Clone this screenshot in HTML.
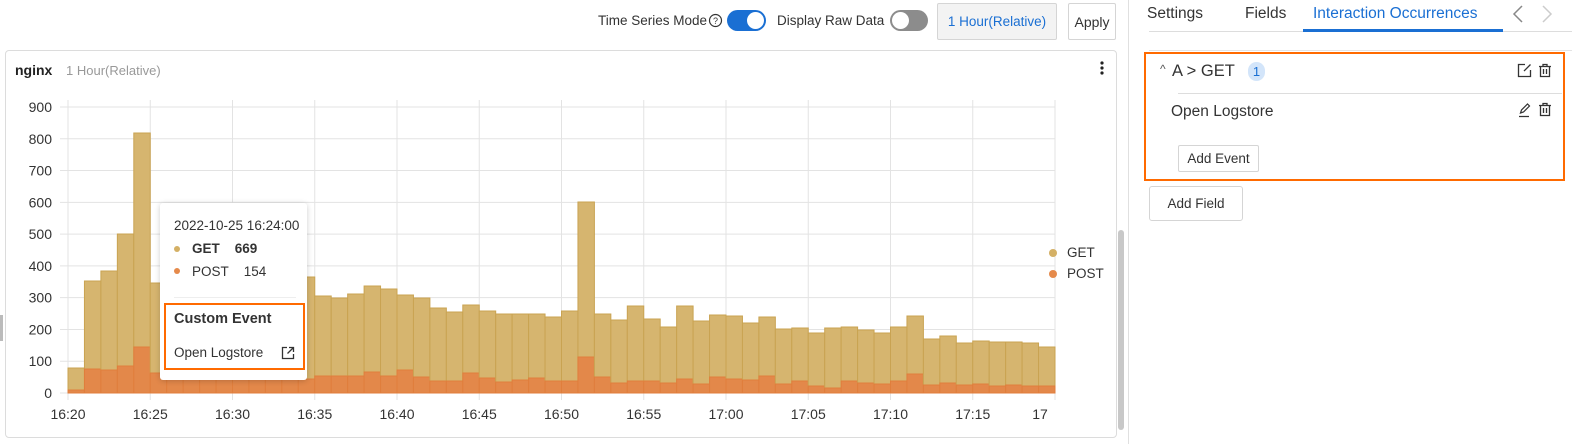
<!DOCTYPE html>
<html><head><meta charset="utf-8">
<style>
*{box-sizing:border-box;margin:0;padding:0}
body{width:1577px;height:444px;background:#fff;font-family:"Liberation Sans",sans-serif;color:#333;position:relative;overflow:hidden;font-size:13.5px}
.a{position:absolute;white-space:nowrap}
.btn{position:absolute;border:1px solid #d5d5d5;background:#fff;font-size:13.5px;color:#333;display:flex;align-items:center;justify-content:center;border-radius:2px}
</style></head><body>
<div class="a" style="left:598px;top:13px">Time Series Mode</div>
<svg class="a" style="left:708px;top:13px" width="16" height="16"><circle cx="7.5" cy="7.5" r="6" fill="none" stroke="#333" stroke-width="1.2"/><text x="7.5" y="11" font-size="9" text-anchor="middle" fill="#333" font-family="Liberation Sans">?</text></svg>
<div class="a" style="left:727px;top:10px;width:39px;height:21px;border-radius:11px;background:#1a6fd3"><div class="a" style="left:20px;top:2px;width:17px;height:17px;border-radius:50%;background:#fff"></div></div>
<div class="a" style="left:777px;top:13px">Display Raw Data</div>
<div class="a" style="left:890px;top:10px;width:38px;height:21px;border-radius:11px;background:#8c8c8c"><div class="a" style="left:2px;top:2px;width:17px;height:17px;border-radius:50%;background:#fff"></div></div>
<div class="btn" style="left:937px;top:3px;width:120px;height:37px;background:#f3f3f3;color:#1a6fd3">1 Hour(Relative)</div>
<div class="btn" style="left:1068px;top:3px;width:48px;height:37px;font-size:14px">Apply</div>

<div class="a" style="left:5px;top:50px;width:1112px;height:388px;border:1px solid #dcdcdc;border-radius:4px"></div>
<div class="a" style="left:15px;top:62px;font-weight:bold;font-size:14px;color:#222">nginx</div>
<div class="a" style="left:66px;top:63px;font-size:13px;color:#999">1 Hour(Relative)</div>
<svg class="a" style="left:1098px;top:60px" width="8" height="16"><circle cx="4" cy="3" r="1.6" fill="#222"/><circle cx="4" cy="8" r="1.6" fill="#222"/><circle cx="4" cy="13" r="1.6" fill="#222"/></svg>
<div class="a" style="left:1118px;top:230px;width:6px;height:200px;background:#c8c8c8;border-radius:3px"></div>
<div class="a" style="left:0;top:315px;width:3px;height:26px;background:#bbb"></div>

<svg class="a" id="ch" style="left:0;top:0" width="1120" height="440" font-family="Liberation Sans" font-size="14"></svg>

<div class="a" style="left:160px;top:203px;width:147px;height:177px;background:#fff;box-shadow:0 1px 6px rgba(0,0,0,.2);border-radius:3px"></div>
<div class="a" style="left:174px;top:218px;font-size:13.5px;color:#333">2022-10-25 16:24:00</div>
<div class="a" style="left:174px;top:246px;width:6px;height:6px;border-radius:50%;background:#d4b065"></div>
<div class="a" style="left:192px;top:241px;font-weight:bold;font-size:13.5px">GET&nbsp;&nbsp;&nbsp;&nbsp;669</div>
<div class="a" style="left:174px;top:268px;width:6px;height:6px;border-radius:50%;background:#e58a4b"></div>
<div class="a" style="left:192px;top:264px;font-size:13.5px">POST&nbsp;&nbsp;&nbsp;&nbsp;154</div>
<div class="a" style="left:174px;top:297px;width:122px;height:1px;background:#eee"></div>
<div class="a" style="left:164px;top:303px;width:141px;height:67px;border:2px solid #ff6a00"></div>
<div class="a" style="left:174px;top:311px;font-weight:bold;font-size:14.5px;color:#333">Custom Event</div>
<div class="a" style="left:174px;top:345px;font-size:13.5px">Open Logstore</div>
<svg class="a" style="left:281px;top:346px" width="14" height="14"><path d="M6 1.5H1.5v11h11V8M8 1.5h4.5V6M12.5 1.5L6.5 7.5" fill="none" stroke="#333" stroke-width="1.3"/></svg>

<div class="a" style="left:1049px;top:249px;width:8px;height:8px;border-radius:50%;background:#d4b065"></div>
<div class="a" style="left:1067px;top:245px;font-size:13.5px">GET</div>
<div class="a" style="left:1049px;top:270px;width:8px;height:8px;border-radius:50%;background:#e58a4b"></div>
<div class="a" style="left:1067px;top:266px;font-size:13.5px">POST</div>

<div class="a" style="left:1128px;top:0;width:1px;height:444px;background:#e0e0e0"></div>
<div class="a" style="left:1147px;top:5px;font-size:15.5px;color:#333">Settings</div>
<div class="a" style="left:1245px;top:5px;font-size:15.5px;color:#333">Fields</div>
<div class="a" style="left:1313px;top:5px;font-size:15.5px;color:#1a6fd3">Interaction Occurrences</div>
<div class="a" style="left:1149px;top:31px;width:423px;height:1px;background:#ddd"></div>
<div class="a" style="left:1303px;top:29px;width:200px;height:3px;background:#1a6fd3"></div>
<svg class="a" style="left:1510px;top:4px" width="50" height="20"><path d="M12 2L4 10l8 8" fill="none" stroke="#888" stroke-width="1.5"/><path d="M33 2l8 8-8 8" fill="none" stroke="#ccc" stroke-width="1.5"/></svg>
<div class="a" style="left:1149px;top:50px;width:423px;height:1px;background:#e4e4e4"></div>
<div class="a" style="left:1144px;top:52px;width:421px;height:129px;border:2px solid #ff6a00"></div>
<div class="a" style="left:1160px;top:62px;font-size:12px;color:#555">^</div>
<div class="a" style="left:1172px;top:62px;font-size:16.5px;color:#333">A &gt; GET</div>
<div class="a" style="left:1248px;top:62px;width:17px;height:19px;border-radius:9px;background:#d3e5fa;color:#1a6fd3;font-size:13px;text-align:center;line-height:19px">1</div>
<svg class="a" style="left:1517px;top:63px" width="40" height="16"><path d="M8 1.5H1.5v12h12V7M13.5 1.5L7 8" fill="none" stroke="#333" stroke-width="1.3"/><path d="M22 3.5h12M26 3.5V1.5h4v2M23.5 3.5v10h9v-10M26.5 6v5M29.5 6v5" fill="none" stroke="#333" stroke-width="1.3"/></svg>
<div class="a" style="left:1178px;top:93px;width:384px;height:1px;background:#ddd"></div>
<div class="a" style="left:1171px;top:103px;font-size:15.5px;color:#333">Open Logstore</div>
<svg class="a" style="left:1517px;top:102px" width="40" height="16"><path d="M2 14.5h10M3.5 11l1-3 6-6 2 2-6 6z" fill="none" stroke="#333" stroke-width="1.2"/><path d="M22 3.5h12M26 3.5V1.5h4v2M23.5 3.5v10h9v-10M26.5 6v5M29.5 6v5" fill="none" stroke="#333" stroke-width="1.3"/></svg>
<div class="btn" style="left:1178px;top:145px;width:81px;height:27px">Add Event</div>
<div class="btn" style="left:1149px;top:186px;width:94px;height:35px;border-radius:3px">Add Field</div>

<script>
var g=[368,281,271,234,133,283,288,290,290,287,290,286,288,285,277,296,298,294,286,289,295,298,308,312,305,311,314,314,314,317,311,202,314,320,306,319,327,306,321,315,316,323,317,329,328,333,328,327,330,333,327,316,339,336,343,341,342,342,343,347];
var p=[390,369,370,366,347,373,375,376,375,376,374,376,375,376,379,376,376,376,372,376,370,377,381,381,373,378,382,380,378,381,381,357,377,383,381,381,383,379,384,377,379,380,376,384,381,386,388,381,383,384,381,374,385,383,385,384,386,385,386,386];
var s='',W=16.45,x0=68,y0=393,u=31.78;
for(var k=0;k<=9;k++){var y=y0-k*u;s+='<line x1="60" x2="1055" y1="'+y+'" y2="'+y+'" stroke="#e3e3e3"/>';s+='<text x="52" y="'+(y+5)+'" text-anchor="end" fill="#333">'+(k*100)+'</text>';}
var lb=['16:20','16:25','16:30','16:35','16:40','16:45','16:50','16:55','17:00','17:05','17:10','17:15','17'];
for(var k=0;k<=12;k++){var x=x0+k*82.25;s+='<line x1="'+x+'" x2="'+x+'" y1="100" y2="400" stroke="#e3e3e3"/>';s+='<text x="'+(k==12?1040:x)+'" y="419" text-anchor="middle" fill="#333">'+lb[k]+'</text>';}
for(var i=0;i<60;i++){var x=x0+i*W;s+='<rect x="'+x+'" y="'+g[i]+'" width="'+W+'" height="'+(p[i]-g[i])+'" fill="#d6b56f" stroke="#c9a352" stroke-width="1"/>';s+='<rect x="'+x+'" y="'+p[i]+'" width="'+W+'" height="'+(y0-p[i])+'" fill="#e3884a" stroke="#e07e3c" stroke-width="1"/>';}
document.getElementById('ch').innerHTML=s;
</script>
</body></html>
